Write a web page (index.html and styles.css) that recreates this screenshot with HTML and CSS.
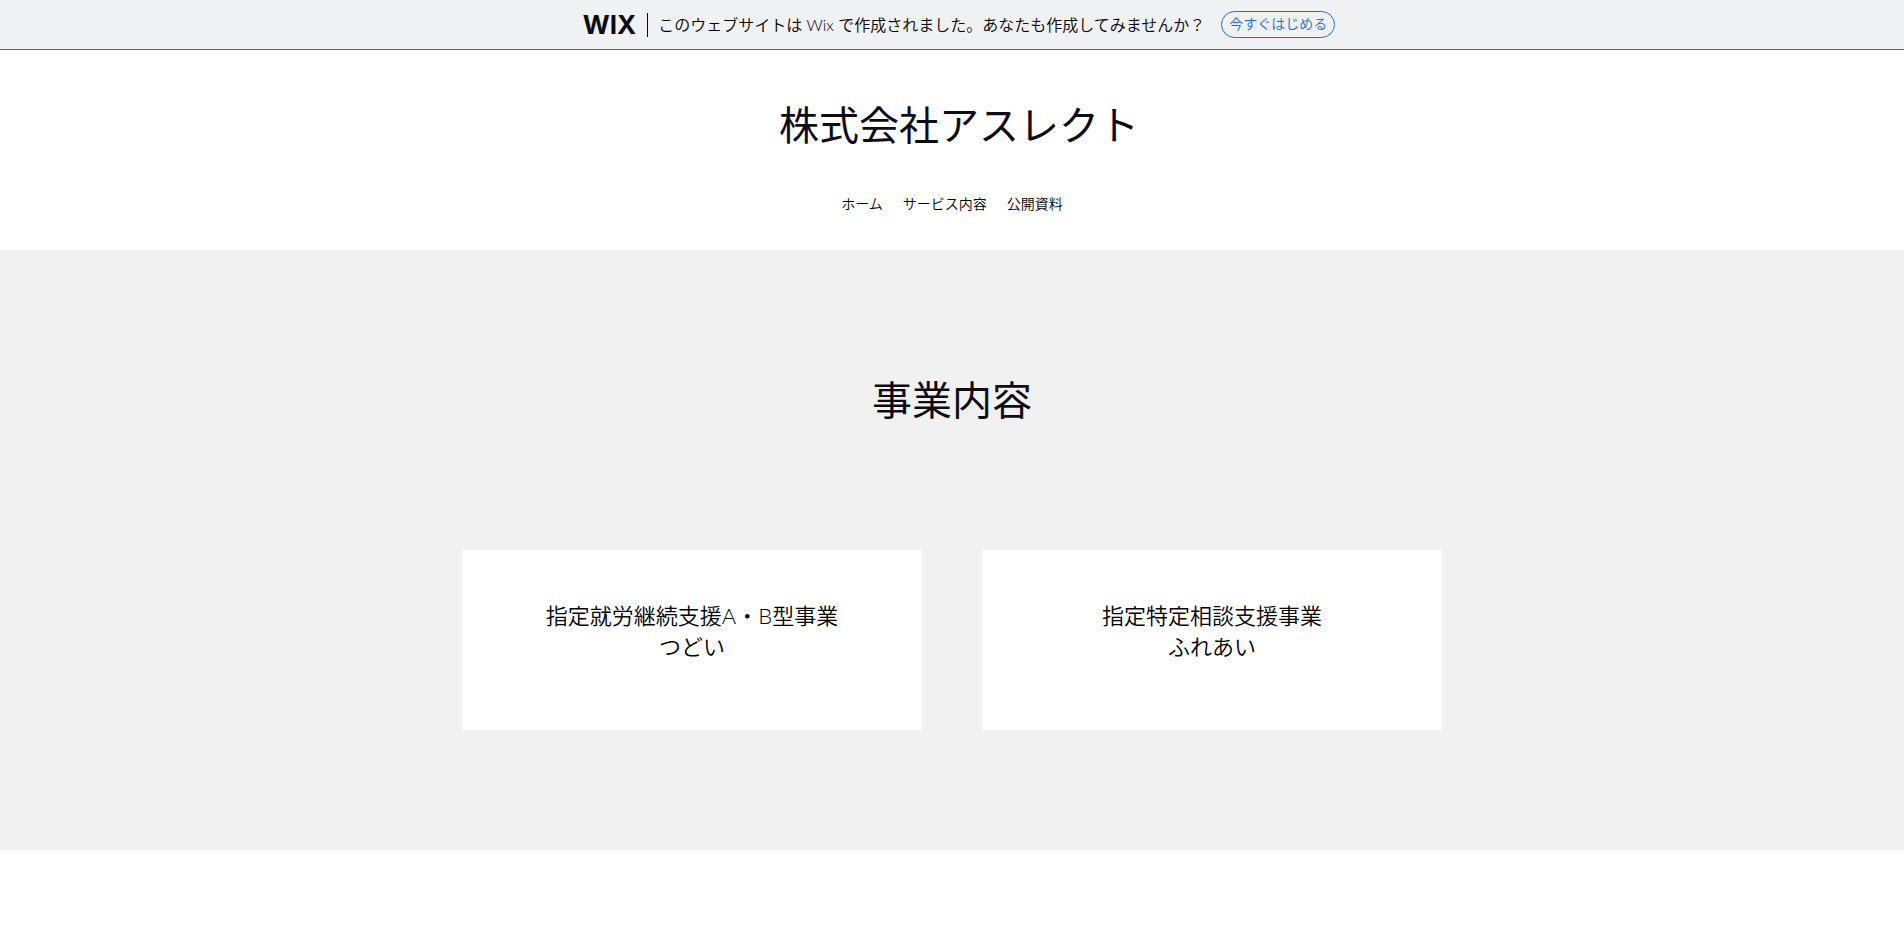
FILE: index.html
```
<!DOCTYPE html>
<html lang="ja">
<head>
    <meta charset="UTF-8">
    <meta name="viewport" content="width=device-width, initial-scale=1.0">
    <title>株式会社アスレクト</title>
    <link rel="stylesheet" href="styles.css">
</head>
<body>
    <aside class="banner">
        <span class="banner-logo">WIX</span>
        <p class="banner-text">このウェブサイトは Wix で作成されました。あなたも作成してみませんか？</p>
        <a href="#" class="banner-button">今すぐはじめる</a>
    </aside>

    <header class="header">
        <h1>株式会社アスレクト</h1>
        <nav class="navbar">
            <a href="#">ホーム</a>
            <a href="#services">サービス内容</a>
            <a href="#">公開資料</a>
        </nav>
    </header>

    <main>
        <section class="services" id="services">
            <h2>事業内容</h2>
            <div class="cards">
                <div class="card">
                    <h3>指定就労継続支援A・B型事業<br>つどい</h3>
                </div>
                <div class="card">
                    <h3>指定特定相談支援事業<br>ふれあい</h3>
                </div>
            </div>
        </section>
    </main>
</body>
</html>
```
FILE: styles.css
```
:root {
    --text-color: #0d0c16;
    --section-bg: #f1f1f1;
    --banner-bg: #eff1f2;
    --accent-color: #1c6dd6;
}

* {
    margin: 0;
    padding: 0;
    box-sizing: border-box;
}

body {
    font-family: Lato, "Noto Sans CJK JP", sans-serif;
    font-weight: 350;
    background-color: #fff;
    color: var(--text-color);
}

a {
    text-decoration: none;
}

/* Top banner */
.banner {
    display: flex;
    justify-content: center;
    align-items: center;
    height: 50px;
    padding-left: 14px;
    background-color: var(--banner-bg);
    border-bottom: 1px solid var(--accent-color);
}

.banner-logo {
    font-family: Inter, sans-serif;
    font-size: 26px;
    font-weight: 700;
    line-height: 24px;
    padding-right: 11px;
    border-right: 1px solid var(--text-color);
}

.banner-text {
    font-size: 16px;
    line-height: 24px;
    margin: 0 16px 0 10px;
    color: #000;
}

.banner-button {
    font-size: 14px;
    line-height: 24px;
    padding: 0 7px 1px;
    color: var(--accent-color);
    border: 1px solid var(--accent-color);
    border-radius: 14px;
}

/* Header */
.header {
    height: 200px;
    padding-top: 48px;
    text-align: center;
}

.header h1 {
    font-size: 40px;
    font-weight: 400;
    line-height: 54px;
    padding-left: 14px;
}

.navbar {
    display: flex;
    justify-content: center;
    gap: 20px;
    margin-top: 42px;
}

.navbar a {
    font-size: 14px;
    line-height: 20px;
    color: #000;
}

/* Services */
.services {
    padding: 120px 20px;
    background-color: var(--section-bg);
    text-align: center;
}

.services h2 {
    font-size: 40px;
    font-weight: 400;
    line-height: 60px;
}

.cards {
    display: grid;
    grid-template-columns: 1fr 1fr;
    gap: 60px;
    max-width: 980px;
    margin: 120px auto 0;
}

.card {
    min-height: 180px;
    padding: 50px 20px;
    background-color: #fff;
}

.card h3 {
    font-size: 22px;
    font-weight: 350;
    line-height: 31px;
    color: #000;
}
```
